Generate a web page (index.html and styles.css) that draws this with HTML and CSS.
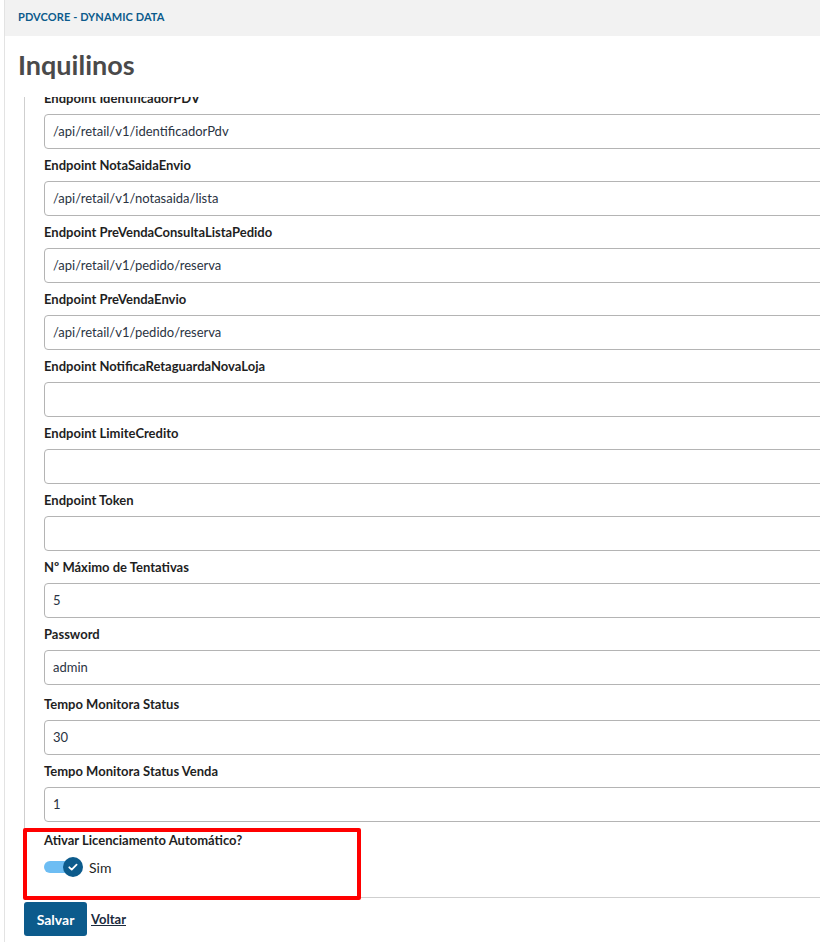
FILE: index.html
```html
<!DOCTYPE html>
<html lang="pt-BR">
<head>
<meta charset="utf-8">
<title>Inquilinos</title>
<link rel="stylesheet" href="styles.css">
</head>
<body>
<div class="page">
  <div class="topbar">PDVCORE - DYNAMIC DATA</div>
  <h1 class="title">Inquilinos</h1>
  <div class="form-area">
    <div class="panel">
      <div class="fields">
        <div class="field">
          <label class="label">Endpoint IdentificadorPDV</label>
          <div class="input">/api/retail/v1/identificadorPdv</div>
        </div>
        <div class="field">
          <label class="label">Endpoint NotaSaidaEnvio</label>
          <div class="input">/api/retail/v1/notasaida/lista</div>
        </div>
        <div class="field">
          <label class="label">Endpoint PreVendaConsultaListaPedido</label>
          <div class="input">/api/retail/v1/pedido/reserva</div>
        </div>
        <div class="field">
          <label class="label">Endpoint PreVendaEnvio</label>
          <div class="input">/api/retail/v1/pedido/reserva</div>
        </div>
        <div class="field">
          <label class="label">Endpoint NotificaRetaguardaNovaLoja</label>
          <div class="input"></div>
        </div>
        <div class="field">
          <label class="label">Endpoint LimiteCredito</label>
          <div class="input"></div>
        </div>
        <div class="field">
          <label class="label">Endpoint Token</label>
          <div class="input"></div>
        </div>
        <div class="field">
          <label class="label">Nº Máximo de Tentativas</label>
          <div class="input">5</div>
        </div>
        <div class="field field--wide">
          <label class="label">Password</label>
          <div class="input">admin</div>
        </div>
        <div class="field">
          <label class="label">Tempo Monitora Status</label>
          <div class="input">30</div>
        </div>
        <div class="field">
          <label class="label">Tempo Monitora Status Venda</label>
          <div class="input">1</div>
        </div>
        <div class="field field--switch">
          <label class="label">Ativar Licenciamento Automático?</label>
          <div class="switch-row">
            <span class="switch">
              <span class="switch-track"></span>
              <span class="switch-knob">
                <svg viewBox="0 0 20 20" width="20" height="20"><path d="M6.3 10.3l2.4 2.3 4.9-5" fill="none" stroke="#fff" stroke-width="1.8" stroke-linecap="round" stroke-linejoin="round"/></svg>
              </span>
            </span>
            <span class="switch-text">Sim</span>
          </div>
        </div>
      </div>
    </div>
    <div class="highlight"></div>
    <div class="actions">
      <button class="btn-primary" type="button">Salvar</button>
      <a class="link" href="#">Voltar</a>
    </div>
  </div>
</div>
</body>
</html>
```

FILE: styles.css
```css
html, body {
  margin: 0;
  padding: 0;
  background: #ffffff;
  overflow: hidden;
}
body {
  font-family: Lato, "Noto Sans", "Liberation Sans", sans-serif;
  color: #1f1f1f;
}
.page {
  margin-left: 4px;
  border-left: 1px solid #e3e3e3;
  height: 942px;
  box-sizing: border-box;
}
.topbar {
  height: 36px;
  box-sizing: border-box;
  background: #f2f2f2;
  padding: 10px 0 0 13px;
  font-size: 11px;
  line-height: 14px;
  font-weight: 700;
  color: #0c5b8c;
  letter-spacing: 0.1px;
}
.title {
  margin: 11px 0 14px 13px;
  font-size: 27px;
  line-height: 36px;
  font-weight: 700;
  color: #4a4a4a;
}
.form-area {
  position: relative;
}
.panel {
  margin-left: 19px;
  border-left: 1px solid #cfcfcf;
  border-bottom: 1px solid #cfcfcf;
  height: 801px;
  box-sizing: border-box;
  overflow: hidden;
  padding-left: 19px;
}
.fields {
  margin-top: -8px;
}
.field {
  margin-bottom: 7px;
}
.field--wide {
  margin-bottom: 10px;
}
.label {
  display: block;
  font-size: 13px;
  line-height: 18px;
  font-weight: 700;
  color: #1f1f1f;
  margin-bottom: 7px;
}
.input {
  height: 35px;
  box-sizing: border-box;
  width: calc(100% + 40px);
  border: 1px solid #b4b4b4;
  border-radius: 4px;
  padding: 0 8px;
  font-size: 13px;
  line-height: 33px;
  color: #2a3342;
}
.field--switch {
  margin-top: 9px;
}
.field--switch .label {
  margin-bottom: 8px;
}
.switch-row {
  display: flex;
  align-items: center;
  gap: 6px;
  height: 20px;
}
.switch {
  position: relative;
  width: 39px;
  height: 20px;
  display: inline-block;
}
.switch-track {
  position: absolute;
  left: 0;
  top: 4px;
  width: 36px;
  height: 12px;
  border-radius: 6px;
  background: #6dbdf3;
}
.switch-knob {
  position: absolute;
  left: 19px;
  top: 0;
  width: 20px;
  height: 20px;
  border-radius: 50%;
  background: #0c5b8c;
  display: flex;
}
.switch-text {
  font-size: 14px;
  color: #1f1f1f;
}
.highlight {
  position: absolute;
  left: 18px;
  top: 731px;
  width: 338px;
  height: 72px;
  box-sizing: border-box;
  border: 4px solid #ff0000;
  border-radius: 2px;
  pointer-events: none;
}
.actions {
  margin: 4px 0 0 19px;
  display: flex;
  align-items: center;
  gap: 4px;
}
.btn-primary {
  width: 63px;
  height: 34px;
  border: none;
  border-radius: 3px;
  background: #0c5b8c;
  color: #ffffff;
  font-family: Lato, "Noto Sans", "Liberation Sans", sans-serif;
  font-size: 14px;
  font-weight: 700;
  padding: 0;
}
.link {
  font-size: 13px;
  font-weight: 700;
  color: #1b2a3d;
  text-decoration: underline;
}
```
